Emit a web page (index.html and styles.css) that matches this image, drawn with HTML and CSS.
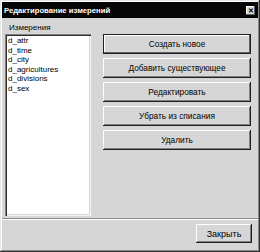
FILE: index.html
```html
<!DOCTYPE html>
<html lang="ru">
  <head>
    <meta charset="UTF-8" />
    <meta name="viewport" content="width=device-width, initial-scale=1.0" />
    <title>Редактирование измерений</title>
    <link rel="stylesheet" href="styles.css">
  </head>
  <body>
    <div class="window">
      <div class="titlebar">
        <span class="title">Редактирование измерений</span>
        <span class="close-box">&#x2715;</span>
      </div>
      <div class="main">
        <div class="label">Измерения</div>
        <!-- dimension list -->
        <ul class="listbox">
          <li>d_attr</li>
          <li>d_time</li>
          <li>d_city</li>
          <li>d_agricultures</li>
          <li>d_divisions</li>
          <li>d_sex</li>
        </ul>
        <div class="actions">
          <button class="btn default">Создать новое</button>
          <button class="btn">Добавить существующее</button>
          <button class="btn">Редактировать</button>
          <button class="btn">Убрать из списания</button>
          <button class="btn">Удалить</button>
        </div>
      </div>
      <div class="separator"></div>
      <div class="footer">
        <button class="btn close-btn">Закрыть</button>
      </div>
    </div>
  </body>
</html>
```
FILE: styles.css
```css
/* Classic dialog look */
body {
  margin: 0;
  font-family: "Liberation Sans", Arial, sans-serif;
  font-size: 8px;
  color: #000;
  background: #fff;
}
.window {
  box-sizing: border-box;
  width: 260px;
  height: 252px;
  padding: 2px;
  background: #d6d6d6;
  display: flex;
  flex-direction: column;
  box-shadow: inset -1px -1px 0 #303030, inset 1px 1px 0 #e6e6e6,
    inset -2px -2px 0 #8a8a8a, inset 2px 2px 0 #ffffff;
}
.titlebar {
  flex: none;
  height: 16px;
  background: #050505;
  color: #fff;
  display: flex;
  align-items: center;
  justify-content: space-between;
  padding: 0 3px 0 2px;
}
.title {
  font-weight: bold;
  font-size: 7.7px;
}
.close-box {
  width: 9px;
  height: 9px;
  background: #d6d6d6;
  color: #000;
  font-size: 7px;
  line-height: 9px;
  text-align: center;
  font-weight: bold;
  box-shadow: inset -1px -1px 0 #606060, inset 1px 1px 0 #fff;
}
.main {
  flex: 1;
  min-height: 0;
  display: grid;
  grid-template-columns: 86px 1fr;
  grid-template-rows: 12px 1fr;
  column-gap: 12px;
  padding: 4px 7px 2px 3px;
}
.label {
  grid-column: 1;
  padding-left: 4px;
  line-height: 11px;
}
.listbox {
  grid-column: 1;
  grid-row: 2;
  margin: 0;
  padding: 2px 3px;
  list-style: none;
  background: #fff;
  box-shadow: inset 1px 1px 0 #808080, inset 2px 2px 0 #303030,
    inset -1px -1px 0 #f4f4f4, inset -2px -2px 0 #d6d6d6;
}
.listbox li {
  line-height: 9.6px;
}
.actions {
  grid-column: 2;
  grid-row: 2;
  display: flex;
  flex-direction: column;
  gap: 4px;
}
.btn {
  height: 20px;
  padding: 0;
  border: none;
  background: #d6d6d6;
  font-family: "Liberation Sans", Arial, sans-serif;
  font-size: 8.3px;
  color: #000;
  box-shadow: inset -1px -1px 0 #202020, inset 1px 1px 0 #ffffff,
    inset -2px -2px 0 #808080;
}
.btn.default {
  box-shadow: inset 0 0 0 1px #202020, inset -2px -2px 0 #606060,
    inset 2px 2px 0 #ffffff;
}
.separator {
  flex: none;
  height: 0;
  border-top: 1px solid #8a8a8a;
  border-bottom: 1px solid #ffffff;
}
.footer {
  flex: none;
  height: 30px;
  box-sizing: border-box;
  display: flex;
  align-items: flex-start;
  justify-content: flex-end;
  padding: 4px 6px 0 0;
}
.close-btn {
  width: 56px;
  height: 19px;
  font-size: 9px;
}
```
